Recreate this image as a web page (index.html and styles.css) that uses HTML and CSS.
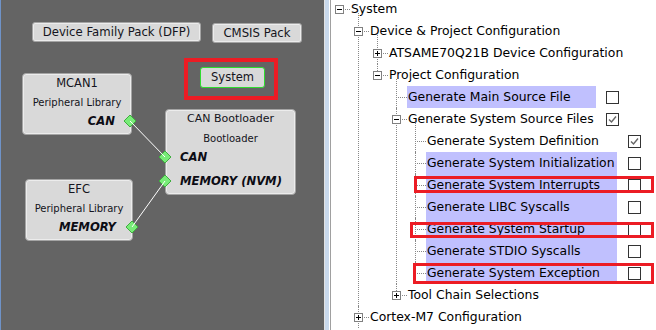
FILE: index.html
```html
<!DOCTYPE html>
<html>
<head>
<meta charset="utf-8">
<title>Project Graph</title>
<link rel="stylesheet" href="styles.css">
</head>
<body>
<div id="Screen">
    <div id="Graph">
        <div class="btn dfp">Device Family Pack (DFP)</div>
        <div class="btn cmsis">CMSIS Pack</div>
        <div class="mark mark_system"></div>
        <div class="btn system">System</div>

        <div class="node mcan">
            <div class="node_title">MCAN1</div>
            <div class="node_sub">Peripheral Library</div>
            <div class="ports out"><div class="port">CAN</div></div>
        </div>
        <div class="node boot">
            <div class="node_title">CAN Bootloader</div>
            <div class="node_sub">Bootloader</div>
            <div class="ports in">
                <div class="port">CAN</div>
                <div class="port">MEMORY (NVM)</div>
            </div>
        </div>
        <div class="node efc">
            <div class="node_title">EFC</div>
            <div class="node_sub">Peripheral Library</div>
            <div class="ports out"><div class="port">MEMORY</div></div>
        </div>

        <svg class="wires" width="323" height="330">
            <g class="pin">
                <polygon points="129,115 135,121 129,127 123,121"/>
                <polygon points="164,151 170,157 164,163 158,157"/>
                <polygon points="164,175 170,181 164,187 158,181"/>
                <polygon points="131,221 137,227 131,233 125,227"/>
            </g>
            <g class="wire">
                <line x1="129" y1="121" x2="164" y2="157"/>
                <line x1="131" y1="227" x2="164" y2="181"/>
            </g>
        </svg>
    </div>
    <div id="Splitter"></div>
    <div id="TreePane">
        <ul class="tree">
            <li>
                <div class="row"><span class="gut"><span class="tog"></span></span><span class="lbl">System</span></div>
                <ul>
                    <li>
                        <div class="row"><span class="gut"><span class="tog"></span></span><span class="lbl">Device &amp; Project Configuration</span></div>
                        <ul>
                            <li>
                                <div class="row"><span class="gut"><span class="tog plus"></span></span><span class="lbl">ATSAME70Q21B Device Configuration</span></div>
                            </li>
                            <li>
                                <div class="row"><span class="gut"><span class="tog"></span></span><span class="lbl">Project Configuration</span></div>
                                <ul>
                                    <li>
                                        <div class="row opt l3"><span class="gut"></span><span class="lbl hl">Generate Main Source File</span><span class="check"></span></div>
                                    </li>
                                    <li>
                                        <div class="row opt l3"><span class="gut"><span class="tog"></span></span><span class="lbl">Generate System Source Files</span><span class="check"><svg viewBox="0 0 11 11"><path d="M2 5.5 L4.5 8 L9 2.5"/></svg></span></div>
                                        <ul>
                                            <li><div class="row opt l4"><span class="gut"></span><span class="lbl">Generate System Definition</span><span class="check"><svg viewBox="0 0 11 11"><path d="M2 5.5 L4.5 8 L9 2.5"/></svg></span></div></li>
                                            <li><div class="row opt l4"><span class="gut"></span><span class="lbl hl">Generate System Initialization</span><span class="check"></span></div></li>
                                            <li><div class="row opt l4"><span class="gut"></span><span class="lbl hl">Generate System Interrupts</span><span class="check"></span></div></li>
                                            <li><div class="row opt l4"><span class="gut"></span><span class="lbl hl">Generate LIBC Syscalls</span><span class="check"></span></div></li>
                                            <li><div class="row opt l4"><span class="gut"></span><span class="lbl hl">Generate System Startup</span><span class="check"></span></div></li>
                                            <li><div class="row opt l4"><span class="gut"></span><span class="lbl hl">Generate STDIO Syscalls</span><span class="check"></span></div></li>
                                            <li><div class="row opt l4"><span class="gut"></span><span class="lbl hl">Generate System Exception</span><span class="check"></span></div></li>
                                        </ul>
                                    </li>
                                    <li>
                                        <div class="row"><span class="gut"><span class="tog plus"></span></span><span class="lbl">Tool Chain Selections</span></div>
                                    </li>
                                </ul>
                            </li>
                        </ul>
                    </li>
                    <li class="cont">
                        <div class="row"><span class="gut"><span class="tog plus"></span></span><span class="lbl">Cortex-M7 Configuration</span></div>
                    </li>
                </ul>
            </li>
        </ul>
        <div class="mark mark_interrupts"></div>
        <div class="mark mark_startup"></div>
        <div class="mark mark_exception"></div>
    </div>
</div>
</body>
</html>
```

FILE: styles.css
```css
html,body{
    margin:0;
    width:656px;
    height:330px;
    overflow:hidden;
    font-family:"DejaVu Sans", Verdana, sans-serif;
}
#Screen
{
    display:flex;
    flex-direction:row;
    height:330px;
}

/* ---- graph canvas ---- */
#Graph
{
    position:relative;
    flex:0 0 325px;
    box-sizing:border-box;
    background-color:#646464;
    border-left:1px solid #6f93c8;
    border-right:1px solid #e2e2e2;
}
#Splitter
{
    flex:0 0 4px;
    background-color:#c9d9ec;
    border-right:1px solid #ffffff;
}
.btn, .node
{
    position:absolute;
    box-sizing:border-box;
    background-color:#d9d9d9;
    border:1px solid #a4a4a4;
    box-shadow:inset 0 0 0 1px #ececec;
    color:#141420;
    text-align:center;
    white-space:nowrap;
}
.btn
{
    border-radius:3px;
    font-size:11.7px;
    height:20px;
    line-height:18px;
}
.dfp    { left:31px;  top:22px; width:169px; }
.cmsis  { left:211px; top:23px; width:90px; }
.system
{
    left:199px; top:67px; width:65px; height:21px; line-height:19px;
    font-size:11.5px;
    border-color:#2fdc2f;
    box-shadow:none;
}
.node
{
    border-radius:4px;
}
.mcan { left:21px;  top:73px;  width:110px; height:62px; }
.boot { left:164px; top:109px; width:131px; height:86px; }
.efc  { left:24px;  top:179px; width:108px; height:62px; }
.node_title
{
    height:18px;
    line-height:18px;
    font-size:11.5px;
}
.boot .node_title { font-size:11px; }
.node_sub
{
    height:22px;
    line-height:22px;
    font-size:10px;
}
.ports
{
    margin-top:-5px;
}
.ports.out { text-align:right; padding-right:16px; }
.ports.in  { text-align:left;  padding-left:14px; }
.port
{
    height:24px;
    line-height:24px;
    font-size:11.6px;
    font-weight:bold;
    font-style:italic;
    color:#0c0c14;
}
.wires
{
    position:absolute;
    left:0;
    top:0;
    pointer-events:none;
}
.pin polygon
{
    fill:#78ec78;
    stroke:#3fae3f;
    stroke-width:1;
}
.wire line
{
    stroke:#ffffff;
    stroke-width:1;
}

/* ---- annotations ---- */
.mark
{
    position:absolute;
    box-sizing:border-box;
    border:3px solid #ec1c24;
}
.mark_system     { left:183px; top:58px; width:94px; height:42px; border-width:4px; }
.mark_interrupts { left:83px; top:176px; width:240px; height:17px; }
.mark_startup    { left:79px; top:222px; width:244px; height:16px; }
.mark_exception  { left:82px; top:263px; width:241px; height:21px; }

/* ---- configuration tree ---- */
#TreePane
{
    position:relative;
    flex:1 1 auto;
    background-color:#ffffff;
    border-left:1px solid #a0a0a0;
    overflow:hidden;
    font-size:12.4px;
    color:#000000;
}
.tree, .tree ul
{
    list-style:none;
    margin:0;
    padding:0 0 0 19px;
}
.tree
{
    padding-left:0;
    margin-top:-2px;
}
.tree li li
{
    position:relative;
}
.tree li li::before
{
    content:"";
    position:absolute;
    left:8px;
    top:0;
    bottom:0;
    border-left:1px dotted #888888;
}
.tree li li:first-child::before { top:-7px; }
.tree li li:last-child::before  { bottom:auto; height:11px; }
.tree li li.cont::before        { bottom:0; height:auto; }
.row
{
    display:flex;
    align-items:center;
    height:22px;
}
.gut
{
    position:relative;
    flex:0 0 19px;
    height:22px;
}
.gut::after
{
    content:"";
    position:absolute;
    left:8px;
    right:0;
    top:11px;
    border-top:1px dotted #888888;
}
.tog
{
    position:absolute;
    left:4px;
    top:7px;
    width:9px;
    height:9px;
    box-sizing:border-box;
    border:1px solid #808080;
    background-color:#ffffff;
    z-index:1;
}
.tog::before
{
    content:"";
    position:absolute;
    left:1px;
    top:3px;
    width:5px;
    height:1px;
    background-color:#000000;
}
.tog.plus::after
{
    content:"";
    position:absolute;
    left:3px;
    top:1px;
    width:1px;
    height:5px;
    background-color:#000000;
}
.lbl
{
    height:22px;
    line-height:22px;
    padding-left:1px;
    white-space:nowrap;
    box-sizing:border-box;
}
.lbl.hl
{
    background-color:#c0c0fe;
}
.l3 .lbl { flex:0 0 189px; }
.l4 .lbl { flex:0 0 191px; }
.check
{
    flex:0 0 13px;
    height:13px;
    box-sizing:border-box;
    border:1px solid #333333;
    background-color:#ffffff;
    margin-left:10px;
}
.l4 .check { margin-left:11px; }
.check svg
{
    display:block;
    width:11px;
    height:11px;
}
.check path
{
    fill:none;
    stroke:#666666;
    stroke-width:1.4;
}
```
